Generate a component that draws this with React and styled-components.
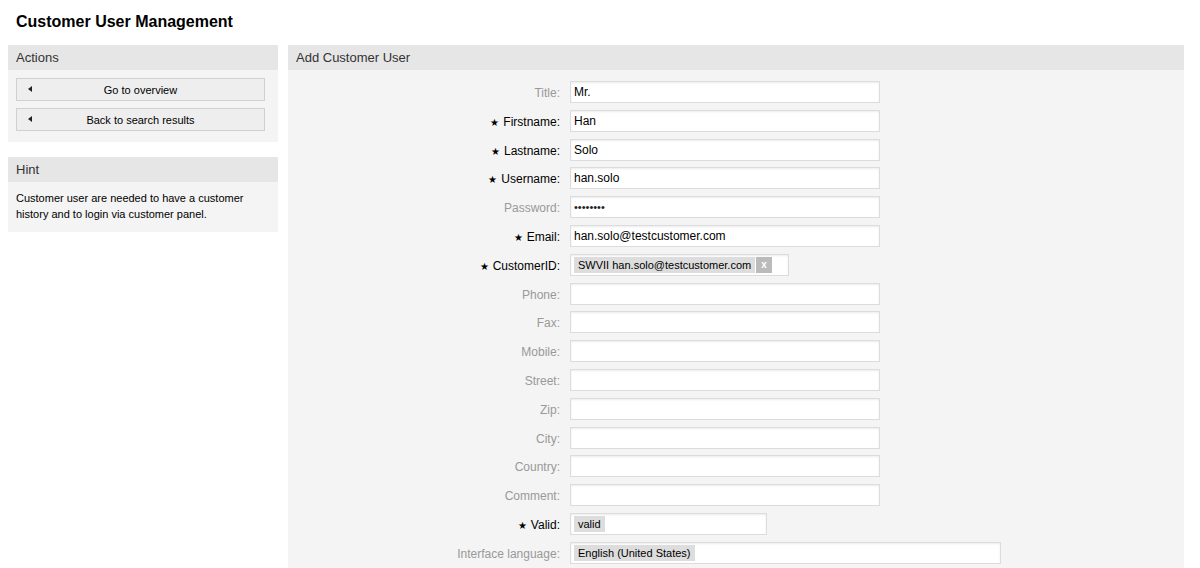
import React from 'react';
import styled, { createGlobalStyle } from 'styled-components';

const Global = createGlobalStyle`
  body {
    margin: 0;
    background: #fff;
    font-family: "Liberation Sans", Arial, sans-serif;
    color: #000;
  }
`;

const Page = styled.div`
  padding: 0 16px 0 8px;
`;

const Title = styled.h1`
  margin: 0;
  padding: 13px 8px 0;
  height: 45px;
  box-sizing: border-box;
  font-size: 16px;
  font-weight: bold;
  color: #000;
`;

const Columns = styled.div`
  display: flex;
  align-items: flex-start;
  gap: 10px;
`;

const Sidebar = styled.div`
  width: 270px;
  display: flex;
  flex-direction: column;
  gap: 15px;
`;

const Box = styled.div`
  background: #f4f4f4;
  flex: ${({ $grow }) => ($grow ? 1 : 'none')};
`;

const Header = styled.div`
  height: 25px;
  background: #e6e6e6;
  color: #333;
  font-size: 13px;
  line-height: 25px;
  padding-left: 8px;
`;

const ActionList = styled.div`
  padding: 8px 13px 11px 8px;
  display: flex;
  flex-direction: column;
  gap: 7px;
`;

const ActionButton = styled.div`
  position: relative;
  height: 23px;
  box-sizing: border-box;
  border: 1px solid #d0d0d0;
  background: #eee;
  font-size: 11px;
  color: #000;
  line-height: 22px;
  text-align: center;
`;

const Arrow = styled.span`
  position: absolute;
  left: 11px;
  top: 7px;
  width: 0;
  height: 0;
  border-top: 3px solid transparent;
  border-bottom: 3px solid transparent;
  border-right: 4px solid #222;
`;

const HintText = styled.p`
  margin: 0;
  padding: 8px 8px 10px;
  font-size: 11px;
  line-height: 16px;
  color: #000;
`;

const Form = styled.div`
  display: flex;
  flex-direction: column;
  gap: 6.8px;
  padding: 11px 0 10px;
`;

const Row = styled.div`
  display: grid;
  grid-template-columns: 272px 1fr;
  column-gap: 10px;
  align-items: center;
`;

const Label = styled.label`
  text-align: right;
  font-size: 12px;
  padding-top: 2px;
  color: ${({ $required }) => ($required ? '#000' : '#999')};
`;

const Star = styled.span`
  font-size: 10px;
  margin-right: 4px;
  color: #000;
`;

const Input = styled.div`
  width: ${({ $w }) => $w}px;
  height: 22px;
  box-sizing: border-box;
  background: #fff;
  border: 1px solid #dcdcdc;
  box-shadow: inset 0 1px 2px rgba(0, 0, 0, 0.08);
  font-size: 12px;
  line-height: 20px;
  padding: 0 3px;
  color: #000;
  display: flex;
  align-items: center;
  gap: 1px;
`;

const Dots = styled.span`
  font-size: 11px;
  letter-spacing: 0;
  color: #222;
`;

const Tag = styled.span`
  background: #ddd;
  font-size: 11px;
  line-height: 16px;
  padding: 0 4px;
  color: #000;
`;

const TagClose = styled.span`
  background: #bbb;
  color: #fff;
  font-size: 10px;
  font-weight: bold;
  line-height: 16px;
  padding: 0 5px;
`;

const fields = [
  { label: 'Title', value: 'Mr.' },
  { label: 'Firstname', value: 'Han', required: true },
  { label: 'Lastname', value: 'Solo', required: true },
  { label: 'Username', value: 'han.solo', required: true },
  { label: 'Password', password: true },
  { label: 'Email', value: 'han.solo@testcustomer.com', required: true },
  { label: 'CustomerID', required: true, tag: 'SWVII han.solo@testcustomer.com', close: true, w: 219 },
  { label: 'Phone' },
  { label: 'Fax' },
  { label: 'Mobile' },
  { label: 'Street' },
  { label: 'Zip' },
  { label: 'City' },
  { label: 'Country' },
  { label: 'Comment' },
  { label: 'Valid', required: true, tag: 'valid', w: 197 },
  { label: 'Interface language', tag: 'English (United States)', w: 431 },
];

const App = () => (
  <Page>
    <Global />
    <Title>Customer User Management</Title>
    <Columns>
      <Sidebar>
        <Box>
          <Header>Actions</Header>
          <ActionList>
            <ActionButton><Arrow />Go to overview</ActionButton>
            <ActionButton><Arrow />Back to search results</ActionButton>
          </ActionList>
        </Box>
        <Box>
          <Header>Hint</Header>
          <HintText>
            Customer user are needed to have a customer history and to login via customer panel.
          </HintText>
        </Box>
      </Sidebar>
      <Box $grow>
        <Header>Add Customer User</Header>
        <Form>
          {fields.map((f) => (
            <Row key={f.label}>
              <Label $required={f.required}>
                {f.required && <Star>★</Star>}
                {f.label}:
              </Label>
              <Input $w={f.w || 310}>
                {f.password && <Dots>••••••••</Dots>}
                {f.value}
                {f.tag && <Tag>{f.tag}</Tag>}
                {f.close && <TagClose>x</TagClose>}
              </Input>
            </Row>
          ))}
        </Form>
      </Box>
    </Columns>
  </Page>
);

export default App;
